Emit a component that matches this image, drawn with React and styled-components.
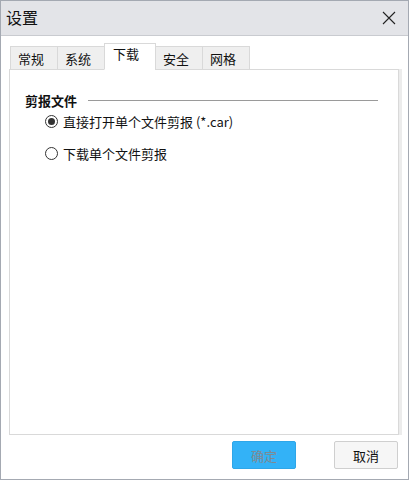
import React, { useState } from "react";
import styled, { createGlobalStyle } from "styled-components";

const GlobalStyle = createGlobalStyle`
  html, body {
    margin: 0;
    padding: 0;
    background: #ffffff;
  }
  body {
    font-family: "Noto Sans CJK SC", "Noto Sans", "Liberation Sans", sans-serif;
    font-size: 13px;
    color: #1a1a1a;
  }
`;

const tabs = ["常规", "系统", "下载", "安全", "网格"];

export default function App() {
  const [active, setActive] = useState("下载");
  const [choice, setChoice] = useState("open");

  return (
    <>
      <GlobalStyle />
      <Window>
        <TitleBar>
          <Title>设置</Title>
          <CloseButton aria-label="关闭">
            <svg width="14" height="14" viewBox="0 0 14 14">
              <path d="M1 1 L13 13 M13 1 L1 13" stroke="#222" strokeWidth="1.1" />
            </svg>
          </CloseButton>
        </TitleBar>
        <Body>
          <TabRow>
            {tabs.map((t) => (
              <Tab key={t} $active={t === active} onClick={() => setActive(t)}>
                {t}
              </Tab>
            ))}
          </TabRow>
          <Panel>
            <GroupHeader>
              <GroupLabel>剪报文件</GroupLabel>
              <GroupLine />
            </GroupHeader>
            <RadioList>
              <RadioRow onClick={() => setChoice("open")}>
                <RadioDot $checked={choice === "open"} />
                直接打开单个文件剪报 (*.car)
              </RadioRow>
              <RadioRow onClick={() => setChoice("download")}>
                <RadioDot $checked={choice === "download"} />
                下载单个文件剪报
              </RadioRow>
            </RadioList>
          </Panel>
        </Body>
        <Footer>
          <Button $primary>确定</Button>
          <Button>取消</Button>
        </Footer>
      </Window>
    </>
  );
}

const Window = styled.div`
  width: 409px;
  height: 480px;
  box-sizing: border-box;
  border: 1px solid #a4a9b2;
  display: flex;
  flex-direction: column;
  background: #ffffff;
`;

const TitleBar = styled.div`
  height: 34px;
  flex: none;
  background: #e3e4e8;
  border-bottom: 1px solid #c9cbd0;
  display: flex;
  align-items: center;
  justify-content: space-between;
  padding: 0 12px 0 5px;
`;

const Title = styled.div`
  font-size: 16px;
  color: #111;
  line-height: 1;
  padding-bottom: 2px;
`;

const CloseButton = styled.div`
  width: 14px;
  height: 14px;
  display: flex;
  cursor: pointer;
`;

const Body = styled.div`
  flex: 1;
  display: flex;
  flex-direction: column;
  padding: 7px 7px 0 8px;
  min-height: 0;
`;

const TabRow = styled.div`
  display: flex;
  align-items: flex-end;
  padding-left: 1px;
  position: relative;
  z-index: 1;
  margin-bottom: -1px;
`;

const Tab = styled.div`
  box-sizing: border-box;
  height: ${(p) => (p.$active ? "27px" : "24px")};
  padding: ${(p) => (p.$active ? "0 16px 0 8px" : "0 13px 0 7px")};
  display: flex;
  align-items: center;
  background: ${(p) => (p.$active ? "#ffffff" : "#efefef")};
  border: 1px solid #d9d9d9;
  border-bottom: ${(p) => (p.$active ? "1px solid #ffffff" : "1px solid #d9d9d9")};
  margin-left: -1px;
  padding-top: ${(p) => (p.$active ? "0" : "1px")};
  padding-bottom: ${(p) => (p.$active ? "6px" : "0")};
  color: #111;
  cursor: pointer;
  &:first-child {
    margin-left: 0;
  }
`;

const Panel = styled.div`
  flex: 1;
  border: 1px solid #d9d9d9;
  box-shadow: 3px 0 0 #ececec;
  margin-right: 2px;
  padding: 21px 20px 0 15px;
`;

const GroupHeader = styled.div`
  display: flex;
  align-items: center;
  gap: 10px;
`;

const GroupLabel = styled.div`
  font-weight: bold;
  color: #111;
`;

const GroupLine = styled.div`
  flex: 1;
  height: 1px;
  background: #9a9a9a;
  margin-left: 1px;
`;

const RadioList = styled.div`
  display: flex;
  flex-direction: column;
  gap: 13px;
  padding: 2px 0 0 20px;
`;

const RadioRow = styled.label`
  display: flex;
  align-items: center;
  gap: 5px;
  height: 19px;
  color: #111;
  cursor: pointer;
`;

const RadioDot = styled.span`
  box-sizing: border-box;
  width: 13px;
  height: 13px;
  border-radius: 50%;
  border: 1px solid #333;
  background: #fff;
  display: flex;
  align-items: center;
  justify-content: center;
  &::after {
    content: "";
    width: 7px;
    height: 7px;
    border-radius: 50%;
    background: ${(p) => (p.$checked ? "#333" : "transparent")};
  }
`;

const Footer = styled.div`
  height: 44px;
  flex: none;
  display: flex;
  justify-content: flex-end;
  align-items: flex-start;
  gap: 38px;
  padding: 6px 10px 0 0;
  box-sizing: border-box;
`;

const Button = styled.div`
  box-sizing: border-box;
  width: 64px;
  height: 28px;
  display: flex;
  align-items: center;
  justify-content: center;
  border-radius: 2px;
  border: 1px solid ${(p) => (p.$primary ? "#2ea6e8" : "#cfcfcf")};
  background: ${(p) => (p.$primary ? "#33b2f7" : "#f6f6f6")};
  color: ${(p) => (p.$primary ? "#7f8a92" : "#111")};
  cursor: pointer;
`;
